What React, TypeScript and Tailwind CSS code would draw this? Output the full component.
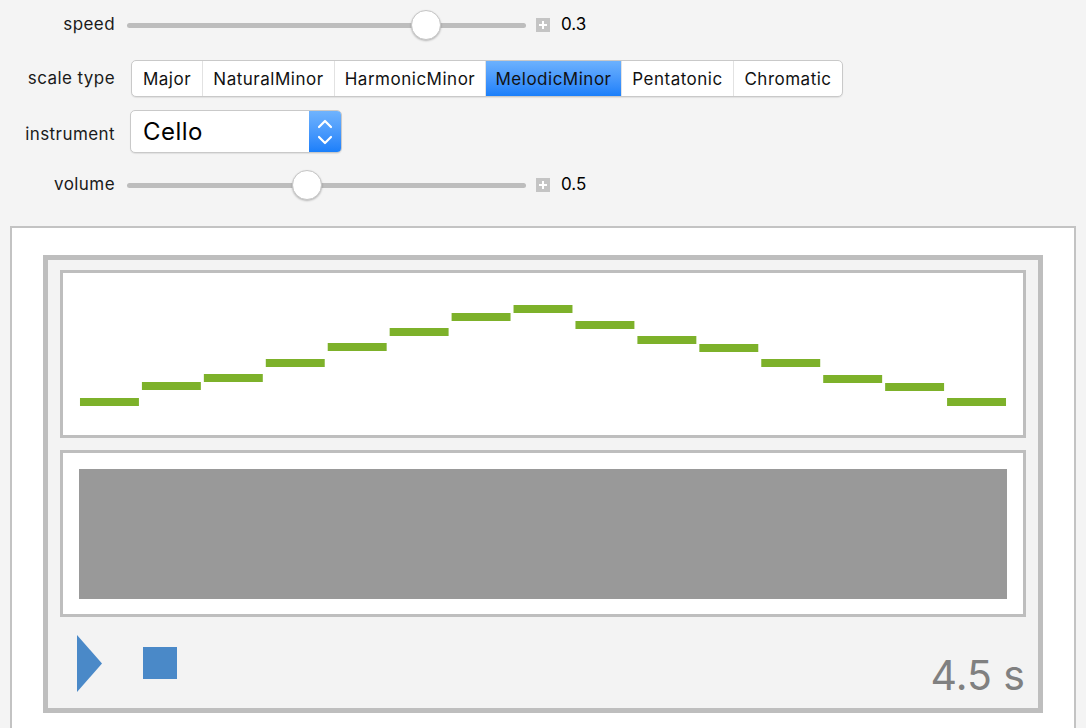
const bars = [125, 109, 101, 86, 70, 55, 40, 32, 48, 63, 71, 86, 102, 110, 125];

const scales = [
  { name: "Major", w: "w-[70px]" },
  { name: "NaturalMinor", w: "w-[132px]" },
  { name: "HarmonicMinor", w: "w-[151px]" },
  { name: "MelodicMinor", w: "w-[136px]" },
  { name: "Pentatonic", w: "w-[112px]" },
  { name: "Chromatic", w: "w-[109px]" },
];

function Label({ text, extra = "" }: { text: string; extra?: string }) {
  return (
    <div className={`w-[115px] shrink-0 text-right text-[17px] tracking-[0.025em] text-[#1a1a1a] ${extra}`}>{text}</div>
  );
}

function Slider({ thumb, value }: { thumb: string; value: string }) {
  return (
    <div className="flex items-center">
      <div className="relative ml-[12px] h-[5px] w-[399px] rounded-full bg-[#bdbdbd]">
        <div
          className={`absolute top-1/2 h-[30px] w-[30px] -translate-x-1/2 -translate-y-1/2 rounded-full border border-[#c6c6c6] bg-white shadow-[0_1px_2px_rgba(0,0,0,0.25)] ${thumb}`}
        />
      </div>
      <div className="relative ml-[10px] h-[14px] w-[14px] bg-[#c4c4c4]">
        <div className="absolute left-[3px] top-[6px] h-[2px] w-[8px] bg-white" />
        <div className="absolute left-[6px] top-[3px] h-[8px] w-[2px] bg-white" />
      </div>
      <div className="ml-[11px] text-[17px] text-black">{value}</div>
    </div>
  );
}

export default function App() {
  return (
    <div className="min-h-screen overflow-hidden bg-[#f4f4f4] font-['Inter','Liberation_Sans',sans-serif]">
      <div className="pt-[8px]">
        <div className="flex h-[34px] items-center">
          <Label text="speed" />
          <Slider thumb="left-[75%]" value="0.3" />
        </div>

        <div className="mt-[18px] flex h-[37px] items-center">
          <Label text="scale type" />
          <div className="ml-[16px] flex h-[37px] overflow-hidden rounded-[5px] border border-[#c9c9c9] bg-white shadow-[0_1px_1px_rgba(0,0,0,0.08)]">
            {scales.map((s, i) => (
              <div
                key={s.name}
                className={`flex items-center justify-center pt-[3px] text-[17px] tracking-[0.03em] text-[#111] ${s.w} ${
                  i > 0 ? "border-l border-[#e2e2e2]" : ""
                } ${s.name === "MelodicMinor" ? "bg-gradient-to-b from-[#6cb1fd] to-[#1a7ffa]" : ""}`}
              >
                {s.name}
              </div>
            ))}
          </div>
        </div>

        <div className="mt-[13px] flex h-[43px] items-center">
          <Label text="instrument" extra="pt-[6px]" />
          <div className="ml-[15px] flex h-[43px] w-[212px] overflow-hidden rounded-[5px] border border-[#c9c9c9] bg-white shadow-[0_1px_1px_rgba(0,0,0,0.08)]">
            <div className="flex flex-1 items-center pl-[12px] text-[24px] tracking-[0.02em] text-black">Cello</div>
            <div className="flex w-[32px] flex-col items-center justify-center gap-[6px] bg-gradient-to-b from-[#6fb3fd] to-[#1a7ffa]">
              <svg width="16" height="10" viewBox="0 0 16 10">
                <path d="M2 8 L8 2 L14 8" fill="none" stroke="white" strokeWidth="2.2" strokeLinecap="round" strokeLinejoin="round" />
              </svg>
              <svg width="16" height="10" viewBox="0 0 16 10">
                <path d="M2 2 L8 8 L14 2" fill="none" stroke="white" strokeWidth="2.2" strokeLinecap="round" strokeLinejoin="round" />
              </svg>
            </div>
          </div>
        </div>

        <div className="mt-[15px] flex h-[34px] items-center">
          <Label text="volume" />
          <Slider thumb="left-[45%]" value="0.5" />
        </div>
      </div>

      <div className="mx-[10px] mt-[24px] border-2 border-[#c3c3c3] bg-white px-[31px] pb-[30px] pt-[27px]">
        <div className="border-[5px] border-[#bebebe] bg-[#f3f3f3] px-[12px] pt-[10px]">
          <div className="h-[168px] border-[3px] border-[#bebebe] bg-white">
            <svg width="100%" height="162" viewBox="0 0 961 162" preserveAspectRatio="none">
              {bars.map((y, i) => (
                <rect key={i} x={17 + 62 * i} y={y} width="59" height="8" fill="#7db12a" />
              ))}
            </svg>
          </div>
          <div className="mt-[12px] border-[3px] border-[#bebebe] bg-white p-[16px] pb-[15px]">
            <div className="h-[130px] bg-[#999999]" />
          </div>
          <div className="flex h-[91px] items-start pl-[17px] pr-[1px]">
            <svg className="mt-[18px]" width="26" height="57" viewBox="0 0 26 57">
              <path d="M0 0 L25 28.5 L0 57 Z" fill="#4a89c8" />
            </svg>
            <div className="ml-[40px] mt-[30px] h-[32px] w-[34px] bg-[#4a89c8]" />
            <div className="ml-auto mt-[38px] text-[41px] leading-none text-[#808080]">4.5 s</div>
          </div>
        </div>
      </div>
    </div>
  );
}
